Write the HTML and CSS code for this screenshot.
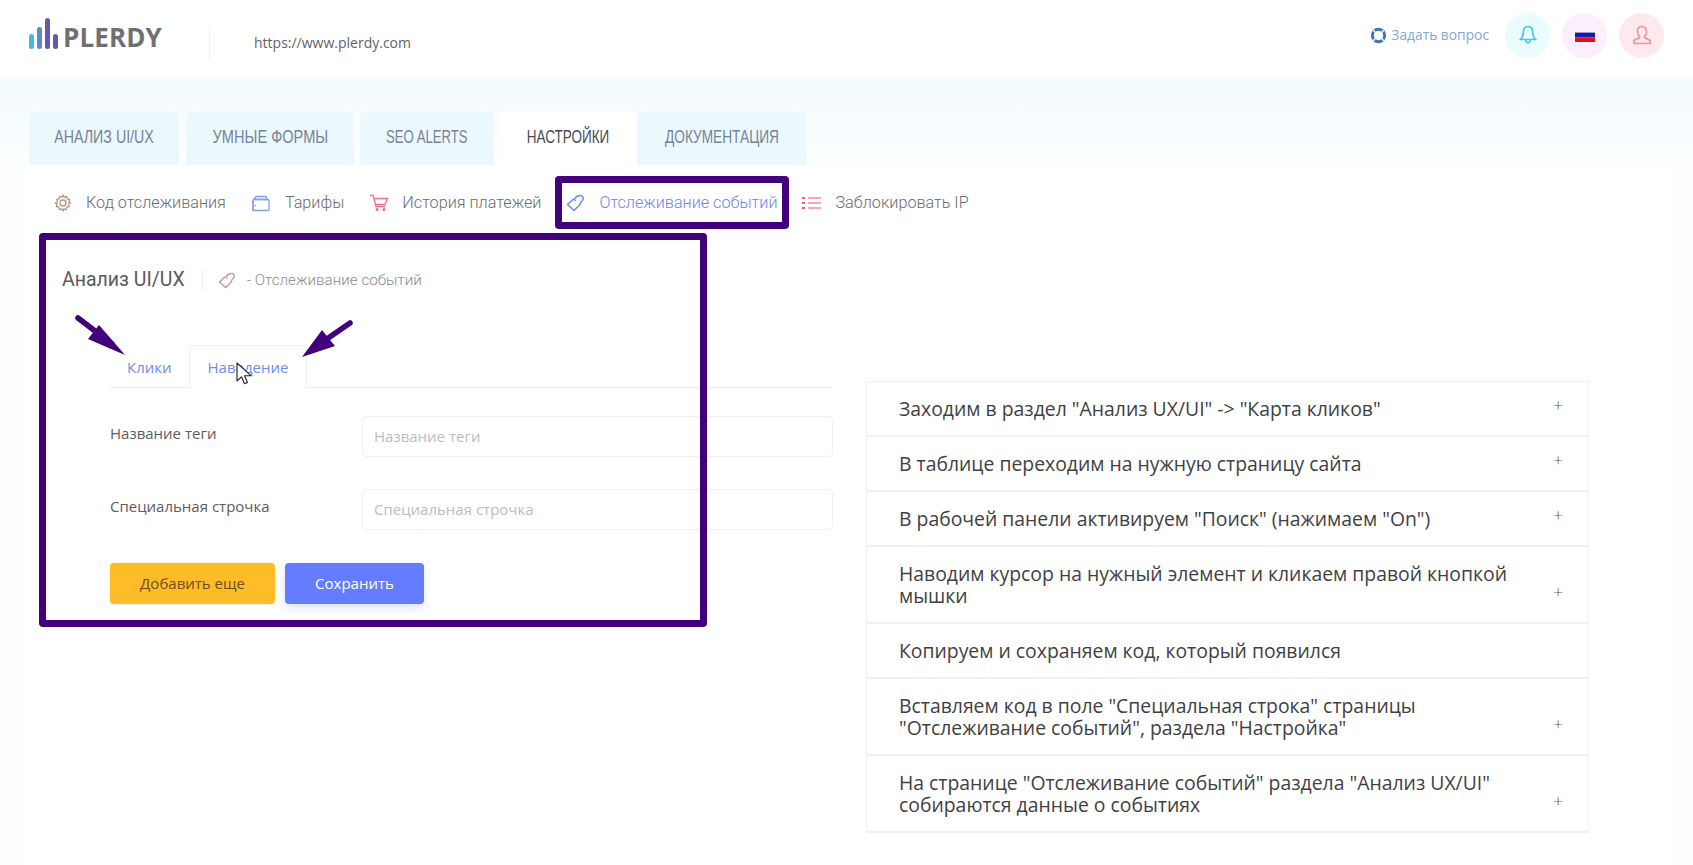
FILE: index.html
```html
<!DOCTYPE html>
<html lang="ru">
<head>
<meta charset="utf-8">
<title>Plerdy</title>
<link rel="stylesheet" href="styles.css">
</head>
<body>
<div class="page">
  <header class="topbar">
    <div class="brand">
      <svg class="logo-bars" width="30" height="32" viewBox="0 0 30 32">
        <rect x="0" y="16" width="5" height="15" rx="2.5" fill="#45b8de"/>
        <rect x="8" y="9" width="5" height="22" rx="2.5" fill="#5b8cc4"/>
        <rect x="16" y="0" width="5" height="31" rx="2.5" fill="#6a55b4"/>
        <rect x="24" y="16" width="5" height="15" rx="2.5" fill="#5a5cb0"/>
      </svg>
      <span class="logo-text">PLERDY</span>
    </div>
    <span class="top-sep"></span>
    <span class="url">https://www.plerdy.com</span>
    <div class="top-right">
      <a class="ask">
        <svg width="17" height="17" viewBox="0 0 17 17" fill="none">
          <circle cx="8.5" cy="8.5" r="6.2" stroke="#3f78b0" stroke-width="3"/>
          <path d="M3.200 3.200l3 3M13.800 3.200l-3 3M3.200 13.800l3-3M13.800 13.800l-3-3" stroke="#fff" stroke-width="1.500"/>
        </svg>
        <span>Задать вопрос</span>
      </a>
      <span class="round round-bell">
        <svg width="18" height="20" viewBox="0 0 18 20" fill="none" stroke="#3fc6ee" stroke-width="1.600">
          <path d="M9 1.500c-3.300 0-4.600 2.600-4.600 5.500 0 3.500-1 5.500-3 7.500h15.200c-2-2-3-4-3-7.500 0-2.900-1.300-5.500-4.600-5.500z"/>
          <path d="M6.800 15c.2 2 1 3 2.200 3s2-1 2.200-3"/>
        </svg>
      </span>
      <span class="round round-flag">
        <svg width="20" height="14" viewBox="0 0 20 14">
          <rect width="20" height="4.600" fill="#f4f4f8"/>
          <rect y="4.600" width="20" height="4.800" fill="#1a1aa8"/>
          <rect y="9.400" width="20" height="4.600" fill="#d8102a"/>
        </svg>
      </span>
      <span class="round round-user">
        <svg width="20" height="20" viewBox="0 0 20 20" fill="none" stroke="#f28ea0" stroke-width="1.600">
          <path d="M10 1.500c-3 0-4.500 2.200-4.500 5 0 2 .8 3.700 2 4.800v1.500l-5.500 2.500v3.200h16v-3.200l-5.500-2.500v-1.500c1.200-1.100 2-2.800 2-4.800 0-2.800-1.500-5-4.500-5z"/>
        </svg>
      </span>
    </div>
  </header>

  <nav class="tabs">
    <a class="tab tab-a"><span>АНАЛИЗ UI/UX</span></a>
    <a class="tab tab-b"><span>УМНЫЕ ФОРМЫ</span></a>
    <a class="tab tab-c"><span>SEO ALERTS</span></a>
    <a class="tab tab-d tab-active"><span>НАСТРОЙКИ</span></a>
    <a class="tab tab-e"><span>ДОКУМЕНТАЦИЯ</span></a>
  </nav>

  <main class="panel">
    <div class="subnav">
      <a class="subitem sub-code">
        <svg width="18" height="18" viewBox="0 0 18 18" fill="none" stroke="#b9937c" stroke-width="1.300">
          <path d="M9 1l1.200 2.100 2.400-.6.6 2.400 2.400.6-.6 2.400L16.700 9l-2.100 1.200.6 2.400-2.400.6-.6 2.400-2.400-.6L9 17l-1.200-2.100-2.400.6-.6-2.400-2.400-.6.6-2.400L1.300 9l2.100-1.200-.6-2.400 2.400-.6.6-2.400 2.400.6z" stroke-linejoin="round"/>
          <circle cx="9" cy="9" r="3"/>
        </svg>
        <span>Код отслеживания</span>
      </a>
      <a class="subitem sub-plans">
        <svg width="18" height="17" viewBox="0 0 18 17" fill="none" stroke="#7f9fee" stroke-width="1.300">
          <path d="M1 15.500V5.500L4 1.500h10l1 3H3"/>
          <path d="M1 5.500c0-.6.700-1 1.200-1H16c.6 0 1 .4 1 1v9c0 .6-.4 1-1 1H1z"/>
          <path d="M3.500 10v1.400" stroke-width="1.500"/>
        </svg>
        <span>Тарифы</span>
      </a>
      <a class="subitem sub-history">
        <svg width="20" height="18" viewBox="0 0 20 18" fill="none" stroke="#f0708a" stroke-width="1.300">
          <path d="M1 1.500h3.200L7 12.500h9"/>
          <path d="M5 4.500h13.500L16 10.500H6.600"/>
          <circle cx="8" cy="15.500" r=".9" fill="#f0708a"/>
          <circle cx="15" cy="15.500" r=".9" fill="#f0708a"/>
        </svg>
        <span>История платежей</span>
      </a>
      <a class="subitem sub-events sub-active">
        <svg width="19" height="18" viewBox="0 0 19 18" fill="none" stroke="#6f88ea" stroke-width="1.500" stroke-linejoin="round" stroke-linecap="round">
          <path d="M7 5.500L1.500 10.500 8 16.500 14 10.500C14.500 9 14.500 8 15.500 7.500 17.500 6 18 3.500 16 2 14.500 1 13 1.500 12.500 2.500 11 1.500 9.500 2.500 10 4 8.500 3.800 8 5 9 6.500"/>
        </svg>
        <span>Отслеживание событий</span>
      </a>
      <a class="subitem sub-block">
        <svg width="19" height="14" viewBox="0 0 19 14" fill="none" stroke="#f08ca0" stroke-width="1.400">
          <path d="M6 2h13M6 7h13M6 12h13"/>
          <path d="M0 2h3M0 7h3M0 12h3" stroke="#ee5f7c" stroke-width="1.800"/>
        </svg>
        <span>Заблокировать IP</span>
      </a>
    </div>

    <div class="columns">
      <section class="left">
        <div class="title-row">
          <h1 class="title">Анализ UI/UX</h1>
          <span class="title-sep"></span>
          <svg width="18" height="17" viewBox="0 0 19 18" fill="none" stroke="#cf8f92" stroke-width="1.400" stroke-linejoin="round" stroke-linecap="round">
            <path d="M7 5.500L1.500 10.500 8 16.500 14 10.500C14.500 9 14.500 8 15.500 7.500 17.500 6 18 3.500 16 2 14.500 1 13 1.500 12.500 2.500 11 1.500 9.500 2.500 10 4 8.500 3.800 8 5 9 6.500"/>
          </svg>
          <span class="title-sub">- Отслеживание событий</span>
        </div>
        <div class="form-wrap">
          <div class="inner-tabs">
            <a class="inner-tab inner-first">Клики</a>
            <a class="inner-tab inner-active">Наведение</a>
          </div>
          <div class="form-row">
            <label class="field-label">Название теги</label>
            <div class="field-input">Название теги</div>
          </div>
          <div class="form-row">
            <label class="field-label">Специальная строчка</label>
            <div class="field-input">Специальная строчка</div>
          </div>
          <div class="actions">
            <button class="btn btn-yellow">Добавить еще</button>
            <button class="btn btn-blue">Сохранить</button>
          </div>
        </div>
      </section>

      <section class="accordion">
        <div class="acc-row"><span>Заходим в раздел "Анализ UX/UI" -&gt; "Карта кликов"</span><i class="plus">+</i></div>
        <div class="acc-row"><span>В таблице переходим на нужную страницу сайта</span><i class="plus">+</i></div>
        <div class="acc-row"><span>В рабочей панели активируем "Поиск" (нажимаем "On")</span><i class="plus">+</i></div>
        <div class="acc-row"><span>Наводим курсор на нужный элемент и кликаем правой кнопкой мышки</span><i class="plus">+</i></div>
        <div class="acc-row"><span>Копируем и сохраняем код, который появился</span></div>
        <div class="acc-row"><span>Вставляем код в поле "Специальная строка" страницы "Отслеживание событий", раздела "Настройка"</span><i class="plus">+</i></div>
        <div class="acc-row"><span>На странице "Отслеживание событий" раздела "Анализ UX/UI" собираются данные о событиях</span><i class="plus">+</i></div>
      </section>
    </div>
  </main>

  <div class="mark mark-nav"></div>
  <div class="mark mark-form"></div>
  <svg class="arrow arrow-left" width="60" height="48" viewBox="0 0 60 48">
    <path d="M6 6L40 32" stroke="#42007a" stroke-width="5.500" stroke-linecap="round"/>
    <path d="M54 44L28 14L17 28z" fill="#42007a" transform="translate(-1 -1)"/>
  </svg>
  <svg class="arrow arrow-right" width="60" height="44" viewBox="0 0 60 44">
    <path d="M53 5L24 25" stroke="#42007a" stroke-width="5.500" stroke-linecap="round"/>
    <path d="M5 39L25 12L38 28z" fill="#42007a"/>
  </svg>
  <svg class="cursor" width="16" height="24" viewBox="0 0 16 24">
    <path d="M1 1v18l4.500-4.200 3 7 3-1.300-3-6.800H15z" fill="#fff" stroke="#222" stroke-width="1.100" stroke-linejoin="round"/>
  </svg>
</div>
</body>
</html>
```
FILE: styles.css
```css
* { box-sizing: border-box; }
html, body { margin: 0; padding: 0; height: 865px; overflow: hidden; }
body { font-family: "Open Sans", sans-serif; background: #fff; color: #555; }
.page {
  position: relative;
  height: 865px;
  overflow: hidden;
  background: linear-gradient(#f4fbfe 79px, #fcfeff 170px, #fdfeff);
}

/* top bar */
.topbar {
  height: 79px;
  background: #fff;
  display: flex;
  align-items: center;
  padding: 0 29px 0 29px;
}
.brand {
  width: 180px;
  flex: none;
  display: flex;
  align-items: flex-end;
  gap: 4px;
  margin-top: -8px;
}
.logo-bars { margin-bottom: 3px; flex: none; }
.logo-text {
  font: 700 26px/30px "Open Sans", sans-serif;
  color: #707074;
  letter-spacing: .1px;
  margin-bottom: 1px;
}
.top-sep {
  width: 1px;
  height: 34px;
  background: #eef0f3;
  flex: none;
  margin-top: 7px;
}
.url {
  margin-left: 44px;
  font: 400 14px/20px "Open Sans", sans-serif;
  color: #5f6368;
  margin-top: 7px;
}
.top-right {
  margin-left: auto;
  display: flex;
  align-items: center;
  gap: 12px;
  margin-top: -9px;
}
.ask {
  display: flex;
  align-items: center;
  gap: 4px;
  font: 400 13.800px/18px "Open Sans", sans-serif;
  color: #87a8d4;
  margin-right: 4px;
}
.round {
  width: 45px;
  height: 45px;
  border-radius: 50%;
  display: flex;
  align-items: center;
  justify-content: center;
}
.round-bell { background: #eafcff; }
.round-flag { background: #fdeefb; }
.round-user { background: #ffe9ee; }

/* main tabs */
.tabs {
  display: flex;
  align-items: flex-end;
  margin: 32px 0 0 29px;
  height: 54px;
}
.tab {
  height: 54px;
  display: flex;
  align-items: center;
  justify-content: center;
  padding-bottom: 2px;
  font: 400 18px/20px "Liberation Sans", sans-serif;
  color: #768397;
  background: #ebf9ff;
  border-radius: 8px 8px 0 0;
  white-space: nowrap;
}
.tab span { display: inline-block; }
.tab-a { width: 150px; margin-right: 7px; }
.tab-b { width: 168px; margin-right: 6px; }
.tab-c { width: 134px; margin-right: 5px; }
.tab-d { width: 138px; }
.tab-e { width: 170px; }
.tab-a span { transform: scaleX(.79); }
.tab-b span { transform: scaleX(.81); }
.tab-c span { transform: scaleX(.73); }
.tab-d span { transform: scaleX(.75); }
.tab-e span { transform: scaleX(.76); }
.tab-active { background: #fff; color: #4a4a55; }

/* panel */
.panel {
  margin: 0 23px 0 29px;
  height: 700px;
  background: #fff;
}
.subnav {
  height: 74px;
  display: flex;
  align-items: center;
  padding-top: 2px;
}
.subitem {
  display: flex;
  align-items: center;
  font: 300 16.200px/20px Roboto, sans-serif;
  color: #6b6b70;
  flex: none;
}
.subitem svg { flex: none; }
.sub-code { margin-left: 25px; gap: 14px; }
.sub-plans { margin-left: 26px; gap: 15px; }
.sub-history { margin-left: 25px; gap: 13px; }
.sub-events { margin-left: 25px; gap: 14px; }
.sub-block { margin-left: 25px; gap: 14px; }
.sub-active { color: #6f82ea; }

.columns { display: flex; align-items: flex-start; }
.left { width: 771px; margin-left: 33px; flex: none; padding-top: 29px; }
.title-row { display: flex; align-items: center; height: 24px; }
.title {
  margin: 0;
  font: 400 19.500px/24px Roboto, sans-serif;
  color: #5a5a60;
}
.title-sep {
  width: 1px;
  height: 22px;
  background: #eceef1;
  margin: 0 15px 0 17px;
}
.title-sub {
  margin-left: 11px;
  font: 300 15.200px/20px Roboto, sans-serif;
  color: #8c8c94;
}
.form-wrap { padding-left: 48px; margin-top: 53px; }
.inner-tabs {
  display: flex;
  height: 43px;
  border-bottom: 1px solid #eceef2;
}
.inner-tab {
  height: 43px;
  padding: 0 17px;
  font: 400 15px/43px "Open Sans", sans-serif;
  color: #6f8cea;
  border: 1px solid transparent;
  border-bottom: 0;
}
.inner-first { padding: 0 16px; }
.inner-active {
  padding: 0 17px 0 18px;
  background: #fff;
  border-color: #eceef2;
  border-radius: 4px 4px 0 0;
}
.form-row { display: flex; align-items: flex-start; margin-top: 28px; }
.form-row + .form-row { margin-top: 32px; }
.field-label {
  width: 252px;
  flex: none;
  padding-top: 7px;
  font: 400 15px/20px "Open Sans", sans-serif;
  color: #5c5c62;
}
.field-input {
  flex: 1;
  height: 41px;
  border: 1px solid #f0f1f4;
  border-radius: 4px;
  padding-left: 11px;
  font: 400 15px/38px "Open Sans", sans-serif;
  color: #bcbcc2;
}
.actions { display: flex; gap: 10px; margin-top: 33px; }
.btn {
  height: 41px;
  border: 0;
  border-radius: 4px;
  font: 400 15px/41px "Open Sans", sans-serif;
  padding: 0;
}
.btn-yellow { width: 165px; background: #ffbb28; color: #6b5018; box-shadow: 0 0 3px #ffe9a8; }
.btn-blue { width: 139px; background: #647dff; color: #fff; box-shadow: 0 4px 10px rgba(100,125,255,.22); }

/* accordion */
.accordion {
  width: 723px;
  margin-left: 33px;
  margin-top: 142px;
  border: 1px solid #f0f0f6;
  border-bottom: 0;
  flex: none;
}
.acc-row {
  display: flex;
  justify-content: space-between;
  padding: 15px 0 16px 32px;
  border-bottom: 2px solid #f0f0f6;
  font: 400 20.500px/22px "Open Sans", sans-serif;
  color: #3f3f45;
}
.acc-row span {
  width: 680px;
  margin-right: -40px;
  flex: none;
  transform: scaleX(.945);
  transform-origin: left center;
}
.plus {
  align-self: flex-end;
  font: 300 17px/22px "Open Sans", sans-serif;
  color: #555;
  margin-right: 25px;
  position: relative;
  top: -3px;
}

/* annotations over the screenshot */
.mark {
  position: absolute;
  border: 7px solid #42007a;
  border-radius: 4px;
}
.mark-nav { left: 555px; top: 176px; width: 234px; height: 53px; }
.mark-form { left: 39px; top: 233px; width: 668px; height: 394px; }
.arrow { position: absolute; }
.arrow-left { left: 72px; top: 312px; }
.arrow-right { left: 297px; top: 318px; }
.cursor { position: absolute; left: 236px; top: 362px; }
```
